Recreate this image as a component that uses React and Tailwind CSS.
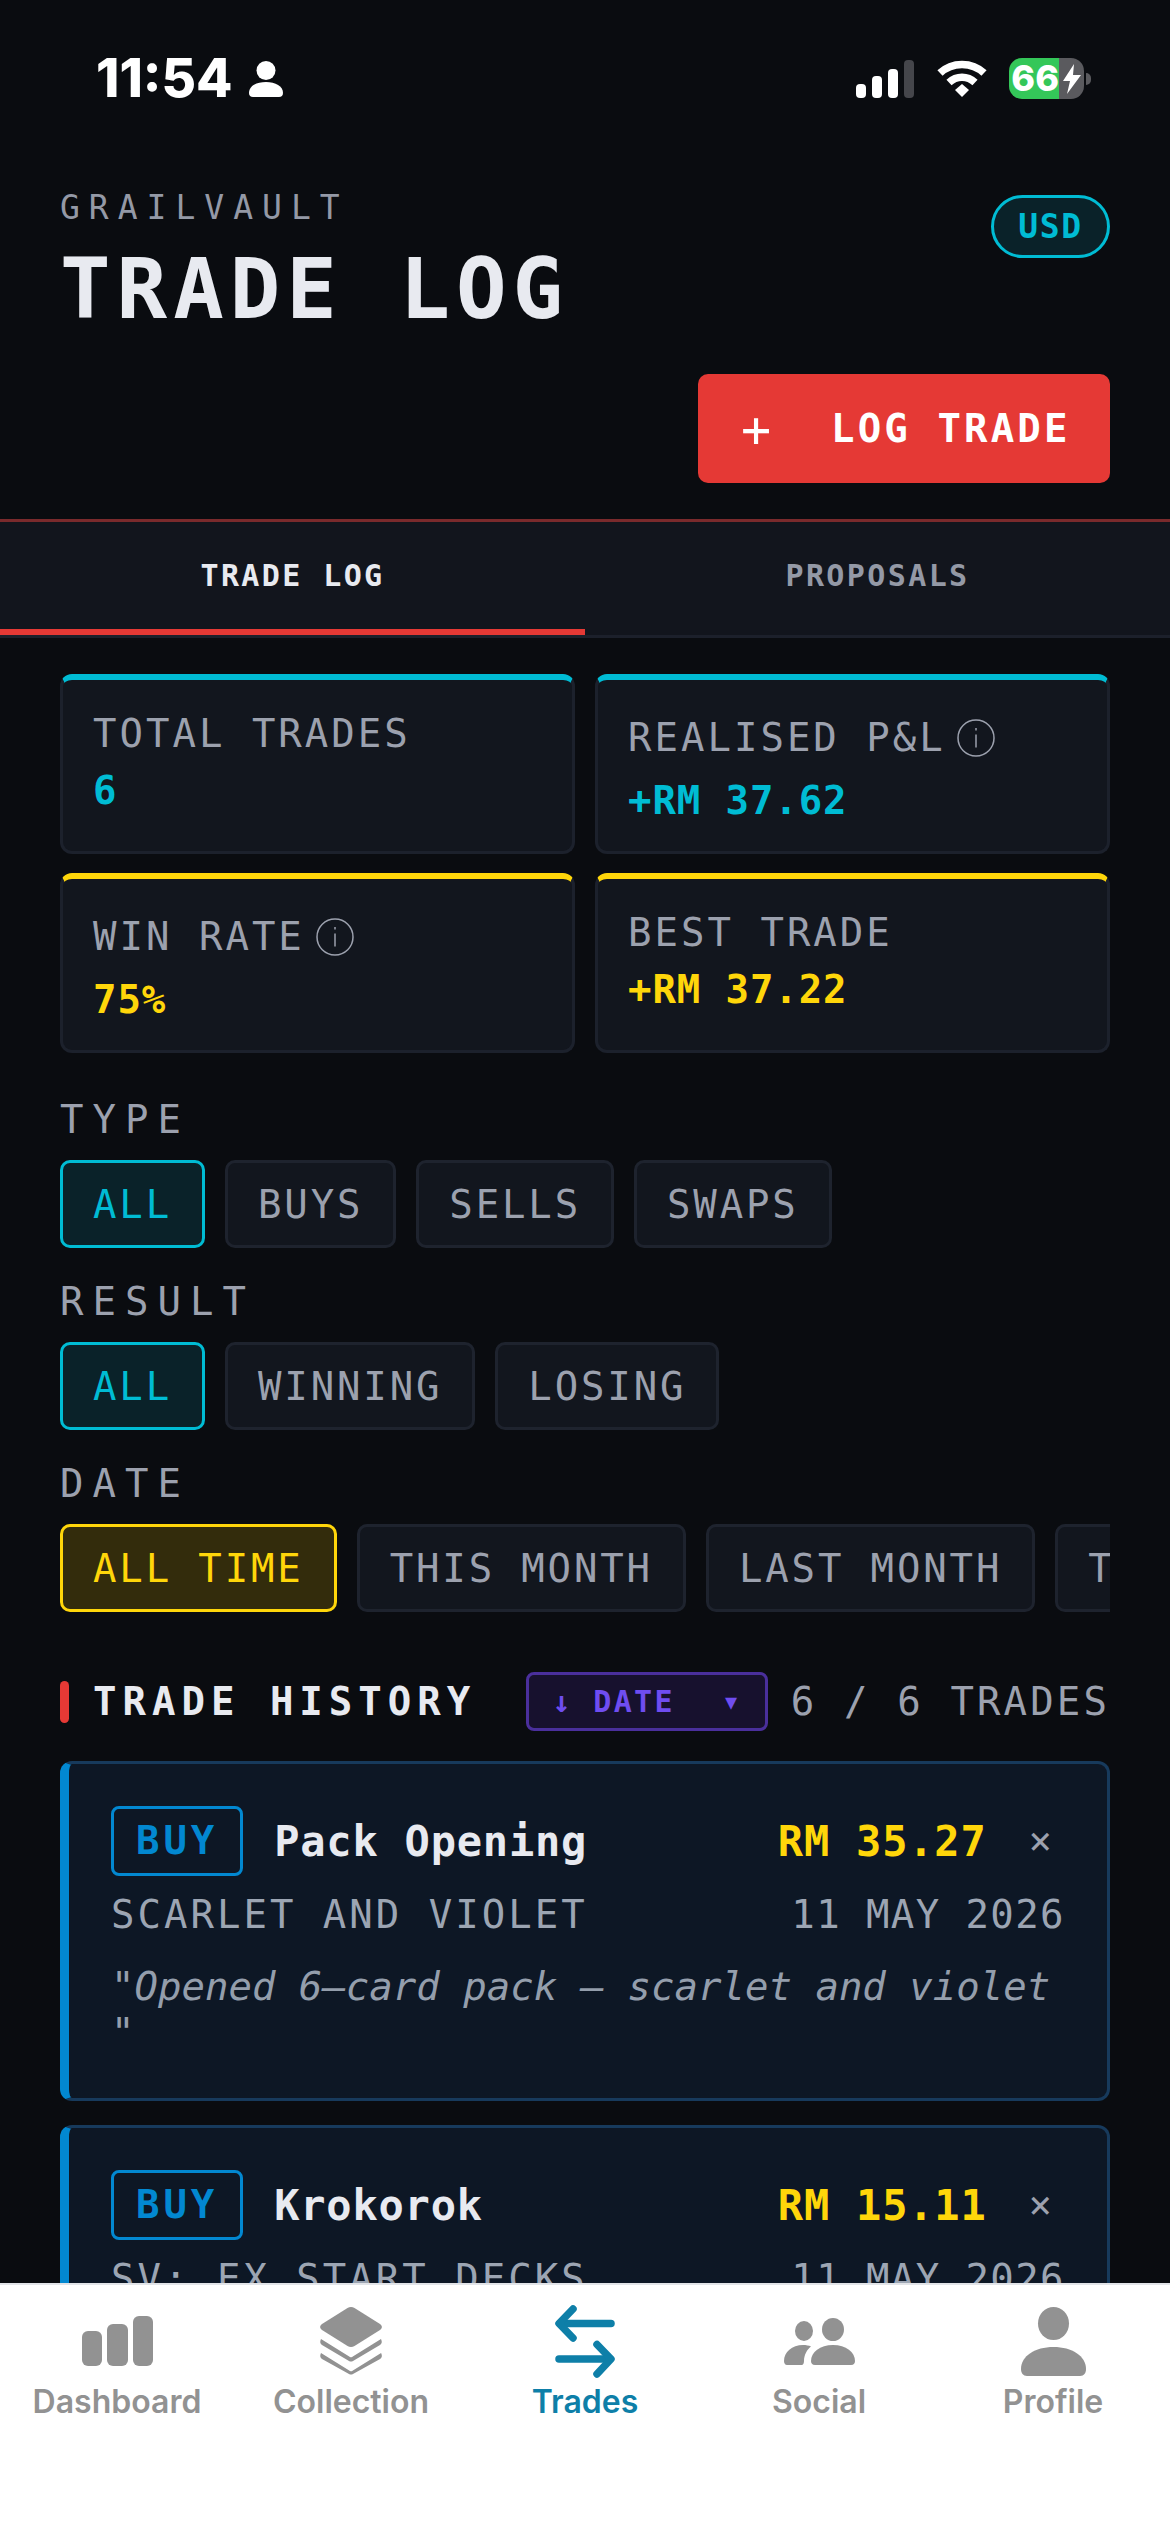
import React from 'react';

const StatusBar = () => (
    <div className="h-[154px] shrink-0 flex items-center justify-between pl-[96px] pr-[79px] pt-[3px]">
        <div className="flex items-center gap-[16px]">
            <span className="font-['Inter',sans-serif] font-extrabold text-[53px] leading-[51px] text-white">11:54</span>
            <svg width="34" height="36" viewBox="0 0 34 36" fill="#fff">
                <circle cx="17" cy="9.500" r="9.500" />
                <path d="M0 32c0-7 7.500-11 17-11s17 4 17 11c0 2.500-1.500 4-4 4H4c-2.500 0-4-1.500-4-4z" />
            </svg>
        </div>
        <div className="flex items-center">
            <svg width="58" height="38" viewBox="0 0 58 38">
                <rect x="0" y="24" width="10" height="14" rx="4" fill="#fff" />
                <rect x="16" y="16" width="10" height="22" rx="4" fill="#fff" />
                <rect x="32" y="9" width="10" height="29" rx="4" fill="#fff" />
                <rect x="48" y="0" width="10" height="38" rx="4" fill="#45464b" />
            </svg>
            <svg className="ml-[23px]" width="50" height="37" viewBox="0 0 50 37" fill="none" stroke="#fff" strokeWidth="7.500">
                <path d="M3 13C15 1.500 35 1.500 47 13" />
                <path d="M12 22.500C19.500 15.500 30.500 15.500 38 22.500" />
                <path d="M18 30l7-6 7 6-7 7z" fill="#fff" stroke="none" />
            </svg>
            <div className="ml-[22px] flex h-[41px] w-[75px] rounded-[13px] overflow-hidden">
                <div className="w-[50px] bg-[#34c759] flex items-center justify-end font-['Inter',sans-serif] font-extrabold text-[36px] leading-[41px] text-white">66</div>
                <div className="w-[25px] bg-[#5a5a5e] flex items-center justify-center">
                    <svg width="18" height="30" viewBox="0 0 18 30" fill="#fff"><path d="M11 0L0 17h7l-3 13L18 11h-8z" /></svg>
                </div>
            </div>
            <div className="ml-[2px] h-[12px] w-[5px] rounded-r-full bg-[#5a5a5e]"></div>
        </div>
    </div>
);

const Header = () => (
    <div className="shrink-0 px-[60px] pt-[36px] pb-[36px]">
        <div className="flex justify-between items-start">
            <div>
                <div className="text-[33px] leading-[36px] tracking-[9px] text-[#9499a6]">GRAILVAULT</div>
                <div className="mt-[22px] text-[84px] leading-[82px] font-bold tracking-[6px] text-[#e8eaf0]">TRADE LOG</div>
            </div>
            <div className="mt-[5px] h-[63px] w-[119px] flex items-center justify-center rounded-full border-[3px] border-[#00bcd4] bg-[#0a2229] text-[33px] font-bold tracking-[1.700px] text-[#00bcd4]">USD</div>
        </div>
        <div className="mt-[44px] flex justify-end">
            <button className="h-[109px] w-[412px] flex items-center pl-[43px] pt-[2px] rounded-[10px] bg-[#e53935] font-bold text-white">
                <span className="text-[50px] leading-[46px] font-normal">+</span>
                <span className="ml-[60px] text-[39px] tracking-[3.120px]">LOG TRADE</span>
            </button>
        </div>
    </div>
);

const Tabs = () => (
    <div className="shrink-0 flex border-t-[3px] border-t-[#7a2a2c] border-b-[3px] border-b-[#1c202b] bg-[#12151d]">
        <div className="w-1/2 h-[113px] flex items-center justify-center border-b-[6px] border-[#e53935] text-[30px] font-bold tracking-[2.400px] text-[#e8eaf0]">TRADE LOG</div>
        <div className="w-1/2 h-[113px] flex items-center justify-center border-b-[6px] border-transparent text-[30px] font-bold tracking-[2.400px] text-[#9499a6]">PROPOSALS</div>
    </div>
);

const InfoIcon = () => (
    <svg className="ml-[11px] shrink-0" width="38" height="38" viewBox="0 0 38 38" fill="none" stroke="#9ca1ae" strokeWidth="1.500">
        <circle cx="19" cy="19" r="18" />
        <path d="M19 15.500v13" />
        <path d="M19 9v2.500" />
    </svg>
);

const StatCard = ({ label, value, info, accent }) => (
    <div className={`h-[180px] rounded-[12px] border-[3px] border-[#1c212c] border-t-[6px] bg-[#12161e] px-[30px] pt-[31px] ${accent === 'cyan' ? 'border-t-[#00bcd4]' : 'border-t-[#ffd60a]'}`}>
        <div className={`flex items-center text-[39px] tracking-[3px] text-[#9ca1ae] ${info ? 'h-[54px]' : 'h-[47px]'}`}>
            {label}
            {info && <InfoIcon />}
        </div>
        <div className={`text-[39px] leading-[47px] font-bold tracking-[0.900px] ${info ? 'mt-[12px]' : 'mt-[9px]'} ${accent === 'cyan' ? 'text-[#00bcd4]' : 'text-[#ffd60a]'}`}>{value}</div>
    </div>
);

const Pill = ({ label, active }) => {
    let tone = 'border-[#1e232e] bg-[#12161e] text-[#9ca1ae]';
    if (active === 'cyan') tone = 'border-[#00bcd4] bg-[#0a2229] text-[#00bcd4]';
    if (active === 'yellow') tone = 'border-[#ffd60a] bg-[#332c0c] text-[#ffd60a]';
    return (
        <div className={`h-[88px] shrink-0 flex items-center px-[30px] pt-[2px] rounded-[10px] border-[3px] text-[39px] tracking-[2.850px] ${tone}`}>
            {label}
        </div>
    );
};

const FilterGroup = ({ label, options, active, first }) => (
    <div className={first ? 'mt-[43px]' : 'mt-[30px]'}>
        <div className="text-[39px] leading-[47px] tracking-[9px] text-[#9ca1ae]">{label}</div>
        <div className="mt-[17px] flex gap-[20px] overflow-hidden">
            {options.map((o, i) => <Pill key={o} label={o} active={i === 0 ? active : null} />)}
        </div>
    </div>
);

const TradeCard = ({ name, amount, set, date, note }) => (
    <div className="rounded-[12px] border-[3px] border-[#173a5c] border-l-[9px] border-l-[#0288d1] bg-[#0d1725] pl-[42px] pr-[42px] pt-[42px] pb-[42px]">
        <div className="flex items-center">
            <div className="h-[70px] flex items-center px-[22px] rounded-[8px] border-[3px] border-[#0288d1] text-[39px] font-bold tracking-[3.900px] text-[#0288d1]">BUY</div>
            <div className="ml-[31px] text-[42px] font-bold tracking-[0.800px] text-[#e8eaf0]">{name}</div>
            <div className="ml-auto text-[42px] font-bold tracking-[0.800px] text-[#ffd60a]">{amount}</div>
            <div className="ml-[42px] mr-[13px] text-[39px] text-[#9ca1ae]">×</div>
        </div>
        <div className="mt-[15px] flex justify-between text-[39px] leading-[47px] text-[#9ca5b3]">
            <span className="tracking-[3px]">{set}</span>
            <span className="tracking-[1.400px]">{date}</span>
        </div>
        {note && (
            <div className="mt-[26px] text-[39px] leading-[46px] text-[#949eac]">
                "<span className="italic">{note}</span><br />"
            </div>
        )}
    </div>
);

const NavItem = ({ label, active, children }) => (
    <div className="w-1/5 flex flex-col items-center">
        <div className="h-[76px] flex items-center justify-center">{children}</div>
        <div className={`mt-[8px] font-['Inter',sans-serif] font-semibold text-[32px] leading-[30px] ${active ? 'text-[#0e7fa8]' : 'text-[#929292]'}`}>{label}</div>
    </div>
);

const BottomNav = () => (
    <div className="h-[249px] shrink-0 bg-white border-t-[2px] border-[#e2e4e8] pt-[18px] flex">
        <NavItem label="Dashboard">
            <svg width="71" height="50" viewBox="0 0 71 50" fill="#929292">
                <rect x="0" y="15" width="20" height="35" rx="6" />
                <rect x="25" y="8" width="21" height="42" rx="6" />
                <rect x="51" y="0" width="20" height="50" rx="6" />
            </svg>
        </NavItem>
        <NavItem label="Collection">
            <svg width="62" height="68" viewBox="0 0 62 68" fill="#929292">
                <path d="M27.500 1L2 17c-2.500 1.700-2.500 4.300 0 6l25.500 16c2.200 1.300 4.800 1.300 7 0L60 23c2.500-1.700 2.500-4.300 0-6L34.500 1c-2.200-1.300-4.800-1.300-7 0z" />
                <path d="M1 32l29 18c.7.4 1.300.4 2 0l29-18c1 2 1.300 4.500-1 6L33 54c-1.300.8-2.700.8-4 0L2 38c-2.300-1.500-2-4-1-6z" />
                <path d="M1 46l29 18c.8.4 1.400.4 2.100 0l29-18c1 2 1.300 4.500-1 6L33 67c-1.300.8-2.700.8-4 0L2 52c-2.300-1.500-2-4-1-6z" />
            </svg>
        </NavItem>
        <NavItem label="Trades" active>
            <svg width="60" height="73" viewBox="0 0 60 73" fill="none" stroke="#0e7fa8" strokeWidth="7.500" strokeLinecap="round" strokeLinejoin="round">
                <path d="M56 18.500H5" />
                <path d="M18 4L4 18.500 18 33" />
                <path d="M4 54h51" />
                <path d="M42 39.500L56 54 42 69" />
            </svg>
        </NavItem>
        <NavItem label="Social">
            <svg width="71" height="47" viewBox="0 0 71 47" fill="#929292">
                <ellipse cx="20" cy="13" rx="9" ry="10" />
                <ellipse cx="49" cy="11.500" rx="11" ry="11.500" />
                <path d="M0 43c0-9 8-16 19-16 3 0 6 .500 8 1.500-4 3-7 8.500-7 14.500 0 1.500-.500 4-2 4H3c-2 0-3-2-3-4z" />
                <path d="M27 43c0-9 9-16 22-16s22 7 22 16c0 2-1 4-4 4H31c-3 0-4-2-4-4z" />
            </svg>
        </NavItem>
        <NavItem label="Profile">
            <svg width="65" height="69" viewBox="0 0 65 69" fill="#929292">
                <ellipse cx="32.500" cy="16.500" rx="15.500" ry="16.500" />
                <path d="M0 62c0-13 14-22 32.500-22S65 49 65 62c0 4-2 7-6 7H6c-4 0-6-3-6-7z" />
            </svg>
        </NavItem>
    </div>
);

export default function App() {
    return (
        <div className="h-[2532px] w-[1170px] flex flex-col overflow-hidden bg-[#0a0c10] font-['DejaVu_Sans_Mono',monospace]">
            <StatusBar />
            <Header />
            <Tabs />
            <div className="flex-1 min-h-0 overflow-hidden px-[60px] pt-[36px]">
                <div className="grid grid-cols-2 gap-x-[20px] gap-y-[19px]">
                    <StatCard label="TOTAL TRADES" value="6" accent="cyan" />
                    <StatCard label="REALISED P&L" value="+RM 37.62" accent="cyan" info />
                    <StatCard label="WIN RATE" value="75%" accent="yellow" info />
                    <StatCard label="BEST TRADE" value="+RM 37.22" accent="yellow" />
                </div>

                <FilterGroup first label="TYPE" options={['ALL', 'BUYS', 'SELLS', 'SWAPS']} active="cyan" />
                <FilterGroup label="RESULT" options={['ALL', 'WINNING', 'LOSING']} active="cyan" />
                <FilterGroup label="DATE" options={['ALL TIME', 'THIS MONTH', 'LAST MONTH', 'THIS YEAR']} active="yellow" />

                <div className="mt-[60px] h-[59px] flex items-center">
                    <div className="h-[42px] w-[9px] rounded-full bg-[#e53935]"></div>
                    <div className="ml-[24px] pt-[2px] text-[39px] font-bold tracking-[6px] text-[#e8eaf0]">TRADE HISTORY</div>
                    <div className="ml-[50px] h-[59px] w-[242px] flex items-center pl-[23px] rounded-[8px] border-[3px] border-[#4a2f9c] bg-[#17112e] text-[30px] font-bold tracking-[2.400px] text-[#6f4df0]">
                        <span>↓ DATE</span>
                        <span className="ml-[50px] text-[20px]">▼</span>
                    </div>
                    <div className="ml-auto pt-[2px] text-[39px] tracking-[3.120px] text-[#9ca1ae]">6 / 6 TRADES</div>
                </div>

                <div className="mt-[30px] flex flex-col gap-[24px]">
                    <TradeCard name="Pack Opening" amount="RM 35.27" set="SCARLET AND VIOLET" date="11 MAY 2026" note="Opened 6–card pack — scarlet and violet" />
                    <TradeCard name="Krokorok" amount="RM 15.11" set="SV: EX START DECKS" date="11 MAY 2026" />
                </div>
            </div>
            <BottomNav />
        </div>
    );
}
